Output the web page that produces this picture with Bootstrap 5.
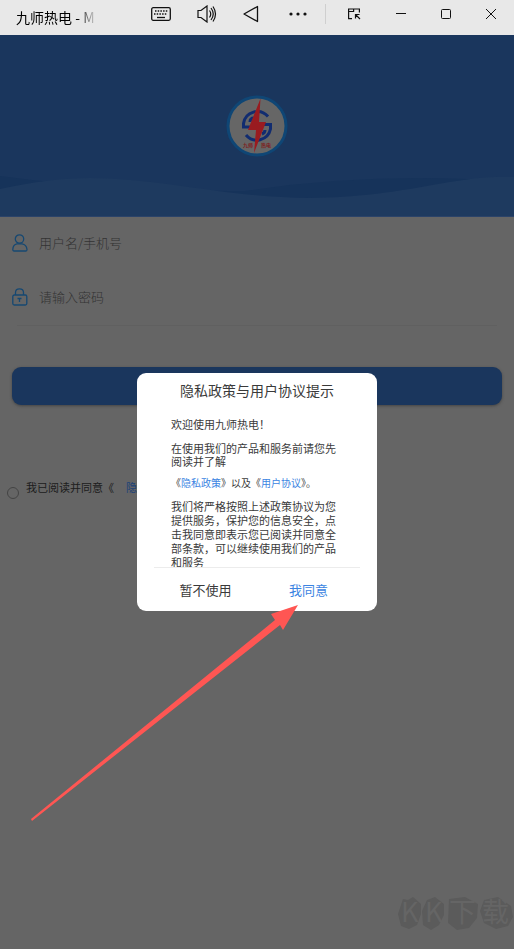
<!DOCTYPE html>
<html lang="zh-CN">
<head>
<meta charset="utf-8">
<meta name="viewport" content="width=device-width, initial-scale=1">
<title>九师热电</title>
<link href="https://cdn.jsdelivr.net/npm/bootstrap@5.3.0/dist/css/bootstrap.min.css" rel="stylesheet">
<style>
body{font-family:"Noto Sans CJK SC",sans-serif;background:#656565;color:#1c1c1c;min-height:100vh}
svg{display:block;flex:none}
.titlebar{height:35px;background:#e8e8e8}
.app-name{width:82px;font-size:14px;line-height:34px;background:linear-gradient(90deg,#000 75%,#e8e8e8 99%);-webkit-background-clip:text;background-clip:text;color:transparent;overflow:hidden}
.tools{gap:26px;margin-right:18px}
.wins{width:189px;border-left:1px solid #cfcfcf;height:20px;padding:0 18px 0 17px}
.tbtn{color:#111;line-height:0}
.hero{height:182px;background:#1a365d;border-bottom:1px solid #2b4369}
.hero .crest{padding-top:60px}
.field-row{height:54px;gap:11px;padding:0 16px 2px 12px}
.field-row input{font:inherit;font-size:13px;font-weight:300;background:transparent;color:#333;outline:0}
.field-row input::placeholder{color:#333;opacity:1}
.rule{height:1px;background:#606060;margin:0 17px}
.login-wrap{padding:41px 12px 0}
.login{height:38px;border-radius:9px;background:#1a365d;box-shadow:0 1px 3px #444}
.agree{font-size:11px;line-height:16px;gap:7px;padding:74px 0 0 7px}
.agree input{appearance:none;width:12px;height:12px;border:1px solid #444;border-radius:50%;margin:8px 0 0}
.agree a{color:#1c4278;margin-left:12px}
.veil{padding-top:35px}
.dialog{width:240px;height:238px;border-radius:9px;background:#fff;color:#3a3a3a}
.dialog h1{font-size:14px;line-height:20px;font-weight:400;margin:7px 0 0}
.terms{font-size:11px;line-height:14px;padding:17px 34px 0;min-height:0}
.terms p{margin-bottom:11px}
.terms .tight{line-height:13px;margin-bottom:8px}
.terms .small-line{font-size:10px;margin-bottom:9px}
.dialog a,.ok{color:#3b84e2}
.acts{margin:0 17px;border-top:1px solid #ececec;height:44px;flex:none}
.acts button{font-size:13px;color:#3a3a3a}
.acts .ok{color:#3b84e2}
.pointer{left:30px;top:600px}
.brand{right:0;bottom:16px;overflow:visible}
</style>
<script src="https://cdn.jsdelivr.net/npm/bootstrap@5.3.0/dist/js/bootstrap.bundle.min.js"></script>
</head>
<body class="position-relative">
<header class="titlebar d-flex justify-content-between">
  <div class="app-name ms-3 text-nowrap">九师热电 - M</div>
  <div class="d-flex pb-2 align-items-center">
    <div class="tools d-flex align-items-center">
      <button class="tbtn btn p-0 border-0" aria-label="键盘"><svg width="20" height="14" fill="none" stroke="#111" stroke-width="1.3"><rect x=".7" y=".7" width="18.6" height="12.6" rx="1.5"/><path d="M4 4h12.500M3 7h13" stroke-dasharray="1.5 1.2"/><path d="M6 10.500h8"/></svg></button>
      <button class="tbtn btn p-0 border-0" aria-label="音量"><svg width="20" height="18" fill="none" stroke="#111" stroke-width="1.2"><path d="M1 5.500h3l6-4.500v16l-6-4.500H1zM12.500 5.500q2.500 3.500 0 7M14 3q4.500 6 0 12M16 1.500q5 7.500 0 15"/></svg></button>
      <button class="tbtn btn p-0 border-0" aria-label="返回"><svg width="16" height="18" fill="none" stroke="#111" stroke-width="1.3" stroke-linejoin="round"><path d="M14.500 1.500v15L1 9z"/></svg></button>
      <button class="tbtn btn p-0 border-0 ms-1" aria-label="更多"><svg width="18" height="4" fill="#111"><circle cx="2" cy="2" r="1.6"/><circle cx="9" cy="2" r="1.6"/><circle cx="16" cy="2" r="1.6"/></svg></button>
    </div>
    <div class="wins d-flex justify-content-between align-items-center">
      <button class="tbtn btn p-0 border-0 ms-1" aria-label="小窗"><svg width="14" height="12" fill="none" stroke="#111" stroke-width="1.2"><path d="M5 10.600H1.600V1h10.800v3.500M1.600 3.500h5V1M13 11L8.500 6.500M8.500 10.500v-4h4"/></svg></button>
      <button class="tbtn btn p-0 border-0" aria-label="最小化"><svg width="10" height="10"><path d="M0 4.500h10" stroke="#111"/></svg></button>
      <button class="tbtn btn p-0 border-0" aria-label="最大化"><svg width="10" height="10" fill="none" stroke="#111"><rect x=".5" y=".5" width="9" height="9" rx="1"/></svg></button>
      <button class="tbtn btn p-0 border-0" aria-label="关闭"><svg width="10" height="10"><path d="M0 0l10 10M10 0L0 10" stroke="#111"/></svg></button>
    </div>
  </div>
</header>
<main>
  <section class="hero d-flex flex-column align-items-center justify-content-between">
    <div class="crest"><svg width="62" height="62" viewBox="0 0 62 62"><circle cx="31" cy="31" r="29" fill="#666" stroke="#0f4675" stroke-width="3"/><g fill="none" stroke="#112c70" stroke-width="3"><path d="M42 21.500A14 14 0 0 0 17.500 28.500V32H28M20 40A14 14 0 0 0 44.500 34V29.500H35"/><path d="M28 23q-4 0-4 4M36 39q3-1 3-4"/></g><path d="M34.500 3.500L22 35h8l-2 23 12-31h-7z" fill="#991b20"/><g font-size="5" font-weight="700" fill="#7d2020"><text x="17" y="52">九师</text><text x="35" y="52">热电</text></g></svg></div>
    <svg class="w-100" height="42" viewBox="0 0 514 42" preserveAspectRatio="none"><path d="M0 2Q120 18 245 17Q330 4 420 4Q470 4 514 8V42H0z" fill="#16335a"/><path d="M0 15Q50 4 90 4C160 4 230 24 310 24C410 23 450 1 514 3V42H0z" fill="#1e3a5f"/></svg>
  </section>
  <form onsubmit="return false">
    <label class="field-row d-flex align-items-center"><svg width="16" height="18" fill="none" stroke="#164872" stroke-width="1.3"><circle cx="7.500" cy="5" r="4.2"/><path d="M.8 15.500Q1 10.500 5 9.800h5q4.500.7 5 5.700 0 1.500-1 1.500H2q-1.200 0-1.200-1.500z"/></svg><input class="border-0 p-0 flex-grow-1" aria-label="用户名" placeholder="用户名/手机号"></label>
    <label class="field-row d-flex align-items-center"><svg width="16" height="18" fill="none" stroke="#164872" stroke-width="1.3"><rect x=".8" y="7" width="14" height="10" rx="1.5"/><path d="M3.500 7V4.500q0-3.700 4-3.700t4 3.700V7"/><path d="M5.500 10.500h4M7.500 10.500V14"/></svg><input type="password" class="border-0 p-0 flex-grow-1" aria-label="密码" placeholder="请输入密码"></label>
    <div class="rule"></div>
    <div class="login-wrap"><button class="login btn border-0 w-100 d-block" aria-label="登录"></button></div>
    <div class="agree d-flex"><input type="checkbox" id="agree"><div><label for="agree">我已阅读并同意《</label><a href="#" class="text-decoration-none">隐</a></div></div>
  </form>
</main>
<div class="veil position-absolute top-0 start-0 w-100 vh-100 d-flex flex-column align-items-center justify-content-center">
  <section class="dialog d-flex flex-column" role="dialog" aria-labelledby="dt">
    <h1 id="dt" class="text-center">隐私政策与用户协议提示</h1>
    <div class="terms flex-grow-1">
      <p>欢迎使用九师热电！</p>
      <p class="tight">在使用我们的产品和服务前请您先阅读并了解</p>
      <p class="small-line">《<a href="#" class="text-decoration-none">隐私政策</a>》以及《<a href="#" class="text-decoration-none">用户协议</a>》。</p>
      <p class="mb-0">我们将严格按照上述政策协议为您提供服务，保护您的信息安全，点击我同意即表示您已阅读并同意全部条款，可以继续使用我们的产品和服务</p>
    </div>
    <div class="acts d-flex"><button class="btn border-0 p-0 w-50">暂不使用</button><button class="btn border-0 p-0 w-50 ok">我同意</button></div>
  </section>
</div>
<svg class="pointer position-absolute" width="270" height="222"><path d="M1 219L245 20 241 14 268 5 253 30 250 25 2 221z" fill="#ff5653"/></svg>
<svg class="brand position-absolute" width="116" height="38"><g fill="#5b5b5b"><path d="M5 4l5 1 5-3 8 7v10l-4 11-8 4-8-3-3-12z"/><path d="M29 5l8-3 9 7v11l-5 10-8 5-8-5-1-14z"/><path d="M51 4l16-2 13 7-1 14-8 10-12 2-9-7z"/><path d="M86 5l14-3 13 9 2 11-5 9-12 3-12-6-4-12z"/></g><g fill="#656565" font-size="27"><text x="3" y="27">K</text><text x="27" y="27">K</text><text x="51" y="27">下</text><text x="84" y="27">载</text></g></svg>
</body>
</html>
